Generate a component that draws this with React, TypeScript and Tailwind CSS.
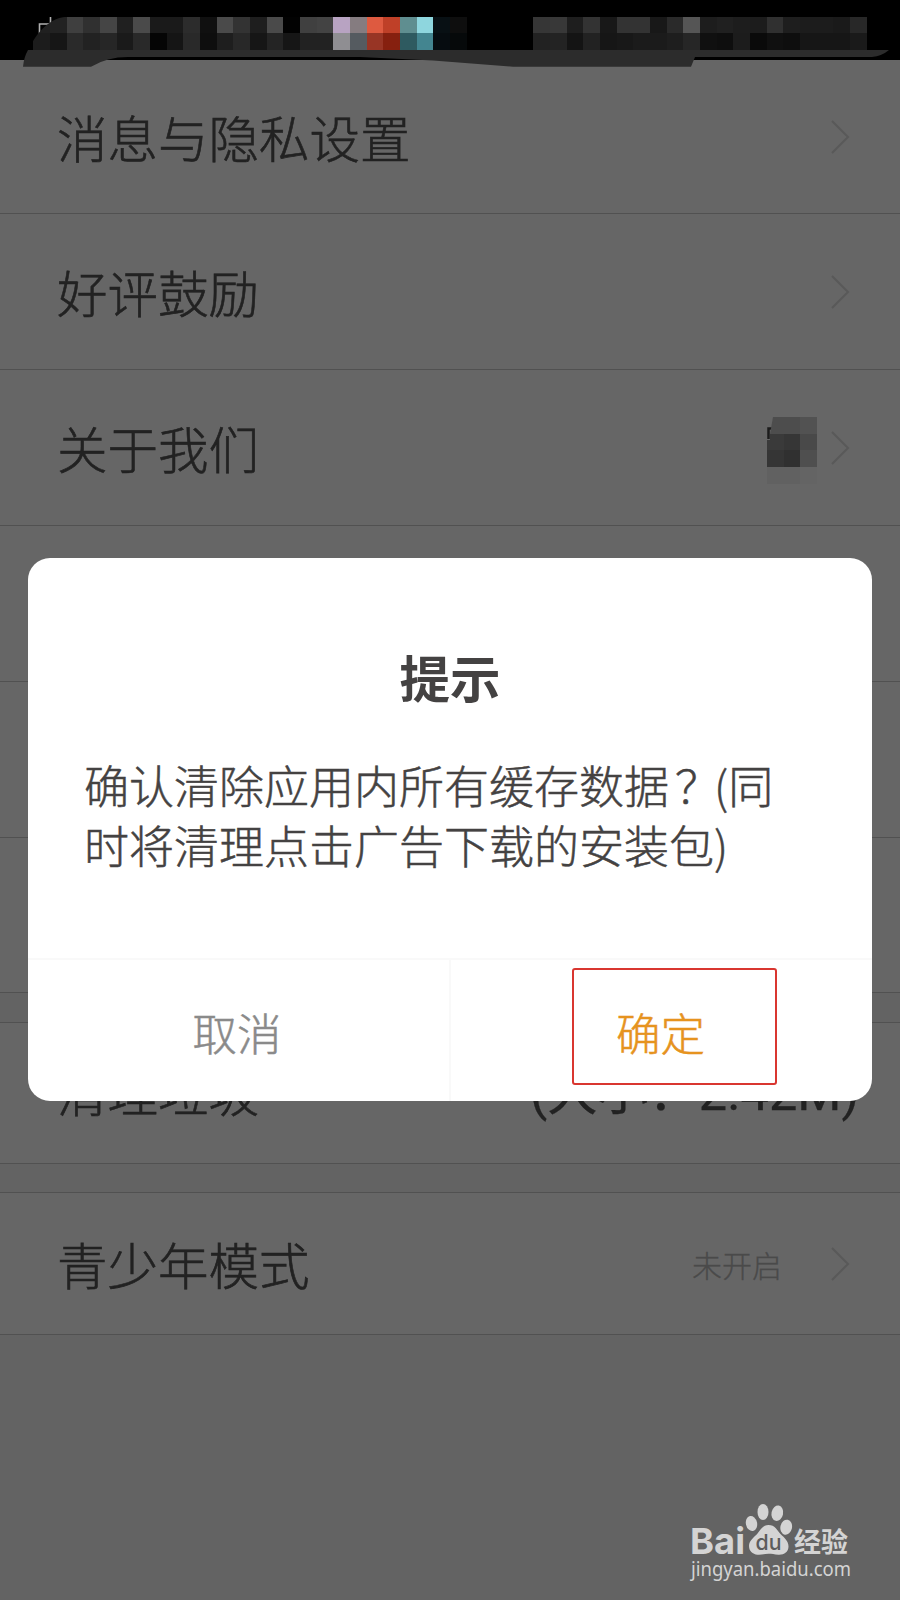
import type { ReactNode } from 'react'

const CELL = 50 / 3

// status bar mosaic, [column, top colour, bottom colour]
const MOSAIC: [number, string, string][] = [
  [2, '#202020', '#1c1c1c'],
  [3, '#222222', '#161616'],
  [4, '#3f3f3f', '#2a2a2a'],
  [5, '#303030', '#222222'],
  [6, '#454545', '#262626'],
  [7, '#202020', '#1a1a1a'],
  [8, '#4a4a4a', '#292929'],
  [9, '#1a1a1a', '#050505'],
  [10, '#1a1a1a', '#151515'],
  [11, '#2c2c2c', '#292929'],
  [12, '#101010', '#0e0e0e'],
  [13, '#4a4a4a', '#1e1e1e'],
  [14, '#333333', '#282828'],
  [15, '#1e1e1e', '#161616'],
  [16, '#4a4a4a', '#242424'],
  [17, '#020202', '#161616'],
  [18, '#404040', '#222222'],
  [19, '#434343', '#222222'],
  [20, '#b8a3c2', '#8f8e92'],
  [21, '#857c80', '#555b60'],
  [22, '#de5a40', '#983525'],
  [23, '#bf4028', '#86200f'],
  [24, '#5f8e90', '#2e5a60'],
  [25, '#8ed6de', '#438590'],
  [26, '#081014', '#060c10'],
  [27, '#0e0e0e', '#06090a'],
  [32, '#363636', '#222222'],
  [33, '#383838', '#232323'],
  [34, '#1e1e1e', '#141414'],
  [35, '#333333', '#222222'],
  [36, '#181818', '#161616'],
  [37, '#333333', '#181818'],
  [38, '#333333', '#1b1b1b'],
  [39, '#181818', '#1b1b1b'],
  [40, '#2a2a2a', '#1e1e1e'],
  [41, '#555555', '#262626'],
  [42, '#1d1d1d', '#101010'],
  [43, '#202020', '#0e0e0e'],
  [44, '#1d1d1d', '#1c1c1c'],
  [45, '#1c1c1c', '#0a0a0a'],
  [46, '#303030', '#101010'],
  [47, '#1e1e1e', '#0e0e0e'],
  [48, '#1c1c1c', '#161616'],
  [49, '#1c1c1c', '#161616'],
  [50, '#1a1a1a', '#161616'],
  [51, '#282828', '#1a1a1a'],
]

function StatusBar() {
  return (
    <header className="h-[60px] bg-black">
      <svg width="900" height="68" viewBox="0 0 900 68" className="block overflow-visible">
        <defs>
          <clipPath id="smudge">
            <path d="M28 50 C34 38 46 18 66.7 16.7 H900 V50 Z" />
          </clipPath>
        </defs>
        <path d="M39.5 35 V24 H50.5 V17" fill="none" stroke="#b0b0b0" strokeWidth="1.6" />
        <g clipPath="url(#smudge)" shapeRendering="crispEdges">
          {MOSAIC.map(([col, top, bottom]) => (
            <g key={col}>
              <rect x={col * CELL} y={CELL} width={CELL} height={CELL} fill={top} />
              <rect x={col * CELL} y={CELL * 2} width={CELL} height={CELL} fill={bottom} />
            </g>
          ))}
        </g>
        <path
          d="M28 50 Q24 57 23 66.7 H91 Q107 57 128 57 H360 L433 60.5 L513 66.7 H691 L695 57 H872 Q882 56 889 50 Z"
          fill="#2c2c2c"
        />
      </svg>
    </header>
  )
}

function Chevron() {
  return (
    <svg width="20" height="36" viewBox="0 0 20 36" className="shrink-0">
      <path d="M1 2 L17 18 L1 34" fill="none" stroke="#595959" strokeWidth="2" />
    </svg>
  )
}

function Row({ label, className, children }: { label?: string; className: string; children?: ReactNode }) {
  return (
    <div className={`flex items-center justify-between border-b border-[#515151] bg-[#666666] pl-[57px] ${className}`}>
      <span className="text-[50.5px] leading-none font-light [-webkit-text-stroke:0.6px]">{label}</span>
      <div className="flex items-center">{children}</div>
    </div>
  )
}

function Blurred() {
  return (
    <svg width="52" height="68" viewBox="0 0 52 68" className="mt-[6px] mr-[12px]">
      <path d="M1.5 22 V11.5 H6" fill="none" stroke="#1c1c1c" strokeWidth="2.5" />
      <path d="M6 0 H34 V17 H3 Z" fill="#4d4d4d" />
      <rect x="33" width="17" height="17" fill="#525252" />
      <rect x="3" y="17" width="14" height="17" fill="#3a3a3a" />
      <rect y="23" width="4" height="11" fill="#3a3a3a" />
      <rect x="17" y="17" width="16.5" height="17" fill="#363636" />
      <rect x="33" y="17" width="17" height="17" fill="#494949" />
      <rect y="33" width="17" height="17" fill="#353535" />
      <rect x="17" y="33" width="16.5" height="17" fill="#303030" />
      <rect x="33" y="33" width="17" height="17" fill="#4f4f4f" />
      <rect y="50" width="33" height="17" fill="#616161" />
      <rect x="33" y="50" width="17" height="17" fill="#646464" />
    </svg>
  )
}

function Watermark() {
  return (
    <svg width="170" height="100" viewBox="0 0 170 100" className="absolute top-[1500px] left-[686px]" fill="#d4d4d4">
      <text x="4" y="53.5" fontFamily="Inter" fontWeight="700" fontSize="36" textLength="55" lengthAdjust="spacingAndGlyphs">
        Bai
      </text>
      <ellipse cx="65.5" cy="23.5" rx="5.6" ry="7.6" transform="rotate(-12 65.5 23.5)" />
      <ellipse cx="77" cy="12" rx="5.5" ry="8" />
      <ellipse cx="91.3" cy="13.2" rx="5.8" ry="7.8" transform="rotate(12 91.3 13.2)" />
      <ellipse cx="100.2" cy="27.2" rx="5.8" ry="7.6" transform="rotate(12 100.2 27.2)" />
      <path d="M82.5 25 C89 25 91 30 94.5 34 C98.5 38 102.5 41 102.5 46.5 C102.5 52 98 55 92.5 54.7 C88 54.4 86 53.8 82.5 53.8 C79 53.8 76 55 71.5 54.7 C66.5 54.3 63 51 63 46 C63 40.5 68 37.5 71.5 33.5 C74.5 30 77 25 82.5 25 Z" />
      <text x="69.5" y="50" fontFamily="Inter" fontWeight="500" fontSize="22" fill="#5c5c5c" textLength="26" lengthAdjust="spacingAndGlyphs">
        du
      </text>
      <text x="108" y="51.5" fontFamily="Noto Sans CJK SC" fontWeight="700" fontSize="27" textLength="54">
        经验
      </text>
      <text x="5" y="75.5" fontFamily="Noto Sans" fontSize="20.5" textLength="160" lengthAdjust="spacingAndGlyphs">
        jingyan.baidu.com
      </text>
    </svg>
  )
}

function Dialog() {
  return (
    <div className="absolute top-[558px] left-[28px] flex h-[543px] w-[844px] flex-col overflow-hidden rounded-[22px] bg-white text-[#444242]">
      <h2 className="mt-[93px] text-center text-[50.5px] leading-[50px] font-bold">提示</h2>
      <div className="mt-[54px] pl-[56px] text-[45px] leading-[60px] font-light whitespace-nowrap [-webkit-text-stroke:0.5px]">
        <p>
          确认清除应用内所有缓存数据<span className="mr-[-6px] ml-[6px]">？</span>(同
        </p>
        <p>时将清理点击广告下载的安装包)</p>
      </div>
      <div className="mt-auto flex h-[143px] border-t-2 border-[#f9f9f9] text-[44.5px] font-light [-webkit-text-stroke:0.5px]">
        <button className="w-[423px] border-r-2 border-[#f9f9f9] pt-[3px] pr-[3px] text-[#8a8a8a]">取消</button>
        <button className="flex-1 pt-[3px] pr-[2px] text-[#e6931f]">确定</button>
      </div>
      <div className="absolute top-[410px] left-[544px] h-[117px] w-[205px] rounded-[3px] border-2 border-[#d93630]" />
    </div>
  )
}

export default function App() {
  return (
    <div className="relative h-[1600px] w-[900px] overflow-hidden bg-[#636363] font-['Noto_Sans_CJK_SC',sans-serif] text-[#222222]">
      <StatusBar />
      <Row label="消息与隐私设置" className="h-[154px] pr-[49px]">
        <Chevron />
      </Row>
      <Row label="好评鼓励" className="h-[156px] pr-[49px]">
        <Chevron />
      </Row>
      <Row label="关于我们" className="h-[156px] pr-[49px]">
        <Blurred />
        <Chevron />
      </Row>
      <Row className="h-[156px]" />
      <Row className="h-[156px]" />
      <Row className="h-[155px]" />
      <Row label="清理垃圾" className="mt-[29px] h-[142px] border-t pr-[41px] pb-[5px]">
        <span className="pt-[6px] font-[Roboto,'Noto_Sans_CJK_SC',sans-serif] text-[50.5px] leading-none [-webkit-text-stroke:0.3px]">
          (大小：2.42M)
        </span>
      </Row>
      <Row label="青少年模式" className="mt-[28px] h-[143px] border-t pr-[49px]">
        <span className="mr-[49px] text-[30px] leading-none font-light text-[#4a4a4a] [-webkit-text-stroke:0.3px]">
          未开启
        </span>
        <Chevron />
      </Row>
      <Dialog />
      <Watermark />
    </div>
  )
}
